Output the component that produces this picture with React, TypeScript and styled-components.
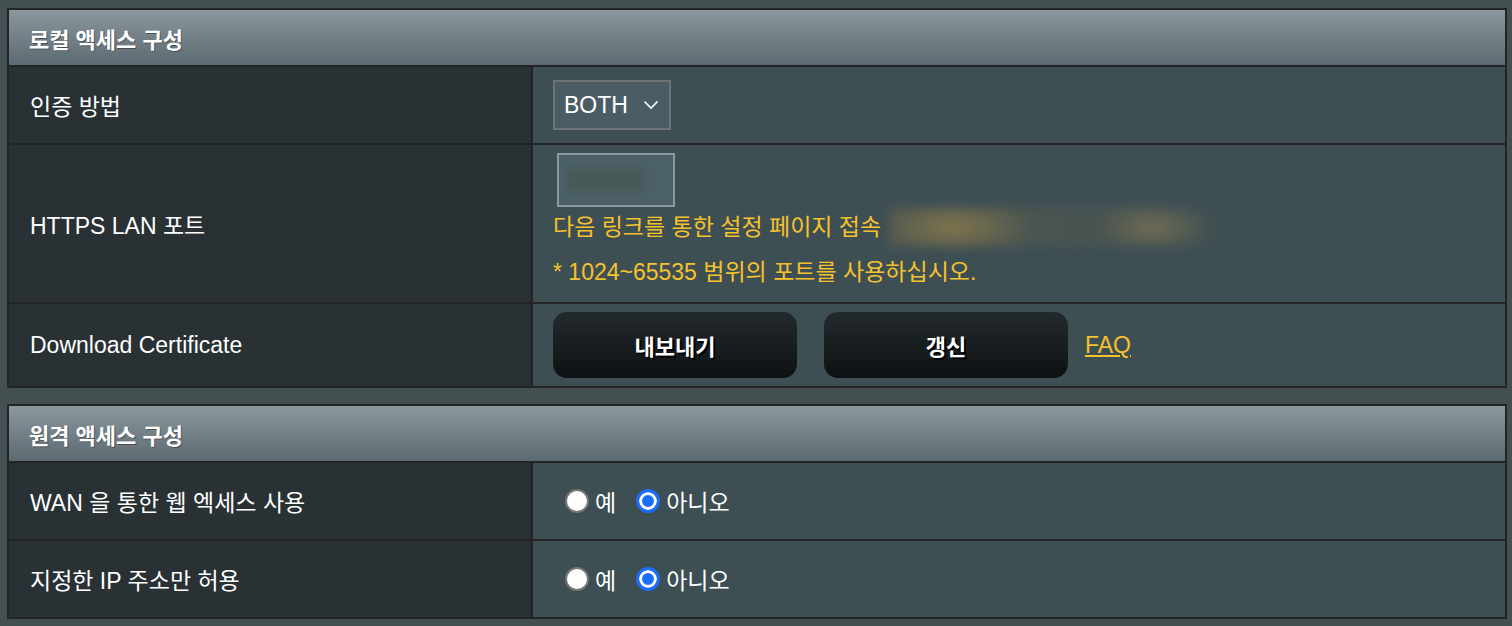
import React, { useState } from "react";
import styled, { createGlobalStyle } from "styled-components";

const GlobalStyle = createGlobalStyle`
  body {
    margin: 0;
    background: #444f52;
    font-family: "Liberation Sans", "Noto Sans CJK KR", sans-serif;
  }
`;

const Page = styled.div`
  padding: 8px 5px 0 7px;
  display: flex;
  flex-direction: column;
  gap: 16px;
`;

const Panel = styled.div`
  display: grid;
  grid-template-columns: 522px 1fr;
  gap: 2px;
  border: 2px solid #222426;
  background: #222426;
`;

const PanelHeader = styled.div`
  grid-column: 1 / -1;
  height: 55px;
  display: flex;
  align-items: center;
  padding-left: 20px;
  background: linear-gradient(#8b979d, #5c6a71);
  color: #fff;
  font-size: 22px;
  font-weight: bold;
  text-shadow: 1px 1px 0 rgba(0, 0, 0, 0.35);
`;

const LabelCell = styled.div<{ h: number }>`
  height: ${({ h }) => h}px;
  display: flex;
  align-items: center;
  padding-left: 21px;
  background: #293135;
  color: #fff;
  font-size: 23px;
`;

const ValueCell = styled.div<{ column?: boolean }>`
  display: flex;
  flex-direction: ${({ column }) => (column ? "column" : "row")};
  align-items: ${({ column }) => (column ? "flex-start" : "center")};
  padding: ${({ column }) => (column ? "8px 20px 0" : "0 20px")};
  background: #3e4f54;
  color: #fff;
  font-size: 23px;
`;

const SelectBox = styled.div`
  width: 118px;
  height: 50px;
  box-sizing: border-box;
  border: 2px solid #6f7476;
  background: #4b5d64;
  display: flex;
  align-items: center;
  justify-content: space-between;
  padding: 0 10px 0 9px;
  color: #fff;
  font-size: 23px;
`;

const PortInput = styled.div`
  margin-left: 4px;
  width: 118px;
  height: 54px;
  box-sizing: border-box;
  border: 2px solid #8a999e;
  background: #4c6068;
  display: flex;
  align-items: center;
  padding-left: 7px;
`;

const Smudge = styled.div`
  width: 78px;
  height: 24px;
  background: #485a58;
  filter: blur(2px);
`;

const Note = styled.div<{ gapTop: number }>`
  margin-top: ${({ gapTop }) => gapTop}px;
  line-height: 40px;
  color: #f6c22c;
  font-size: 23px;
  display: flex;
  align-items: center;
`;

const HiddenLink = styled.span`
  display: inline-block;
  margin-left: 8px;
  width: 330px;
  height: 40px;
  background:
    radial-gradient(ellipse 80px 30px at 20% 50%, rgba(150, 130, 75, 0.7), transparent),
    radial-gradient(ellipse 60px 28px at 80% 50%, rgba(140, 125, 85, 0.6), transparent),
    linear-gradient(90deg, rgba(90, 92, 78, 0.6), rgba(82, 88, 78, 0.5) 60%, rgba(70, 82, 80, 0.2));
  filter: blur(5px);
`;

const ActionButton = styled.button`
  width: 244px;
  height: 66px;
  border: none;
  border-radius: 14px;
  background: linear-gradient(#232a2d, #0e1112);
  color: #fff;
  font-family: inherit;
  font-size: 22px;
  font-weight: bold;
  text-shadow: 2px 2px 0 #000;
  cursor: pointer;
  & + & {
    margin-left: 27px;
  }
`;

const FaqLink = styled.a`
  margin-left: 17px;
  color: #f6c22c;
  font-size: 23px;
  text-decoration: underline;
  cursor: pointer;
`;

const RadioGroup = styled.div`
  display: flex;
  align-items: center;
  padding-left: 12px;
`;

const RadioOption = styled.label`
  display: flex;
  align-items: center;
  gap: 6px;
  margin-right: 20px;
  cursor: pointer;
`;

const RadioDot = styled.span<{ checked: boolean }>`
  width: 24px;
  height: 24px;
  box-sizing: border-box;
  border-radius: 50%;
  background: ${({ checked }) => (checked ? "#1a6ef5" : "#fff")};
  border: ${({ checked }) => (checked ? "3px solid #1a6ef5" : "2px solid #767676")};
  box-shadow: ${({ checked }) => (checked ? "inset 0 0 0 3px #fff" : "none")};
`;

const Chevron = () => (
  <svg width="16" height="10" viewBox="0 0 16 10">
    <polyline points="1.5,1.5 8,8 14.5,1.5" fill="none" stroke="#fff" strokeWidth="1.6" />
  </svg>
);

const YesNo = () => {
  const [value, setValue] = useState("no");
  return (
    <RadioGroup>
      <RadioOption onClick={() => setValue("yes")}>
        <RadioDot checked={value === "yes"} />
        예
      </RadioOption>
      <RadioOption onClick={() => setValue("no")}>
        <RadioDot checked={value === "no"} />
        아니오
      </RadioOption>
    </RadioGroup>
  );
};

const App = () => {
  return (
    <>
      <GlobalStyle />
      <Page>
        <Panel>
          <PanelHeader>로컬 액세스 구성</PanelHeader>
          <LabelCell h={76}>인증 방법</LabelCell>
          <ValueCell>
            <SelectBox>
              BOTH
              <Chevron />
            </SelectBox>
          </ValueCell>
          <LabelCell h={157}>HTTPS LAN 포트</LabelCell>
          <ValueCell column>
            <PortInput>
              <Smudge />
            </PortInput>
            <Note gapTop={0}>
              다음 링크를 통한 설정 페이지 접속
              <HiddenLink />
            </Note>
            <Note gapTop={5}>* 1024~65535 범위의 포트를 사용하십시오.</Note>
          </ValueCell>
          <LabelCell h={82}>Download Certificate</LabelCell>
          <ValueCell>
            <ActionButton>내보내기</ActionButton>
            <ActionButton>갱신</ActionButton>
            <FaqLink>FAQ</FaqLink>
          </ValueCell>
        </Panel>
        <Panel>
          <PanelHeader>원격 액세스 구성</PanelHeader>
          <LabelCell h={76}>WAN 을 통한 웹 엑세스 사용</LabelCell>
          <ValueCell>
            <YesNo />
          </ValueCell>
          <LabelCell h={76}>지정한 IP 주소만 허용</LabelCell>
          <ValueCell>
            <YesNo />
          </ValueCell>
        </Panel>
      </Page>
    </>
  );
};

export default App;
